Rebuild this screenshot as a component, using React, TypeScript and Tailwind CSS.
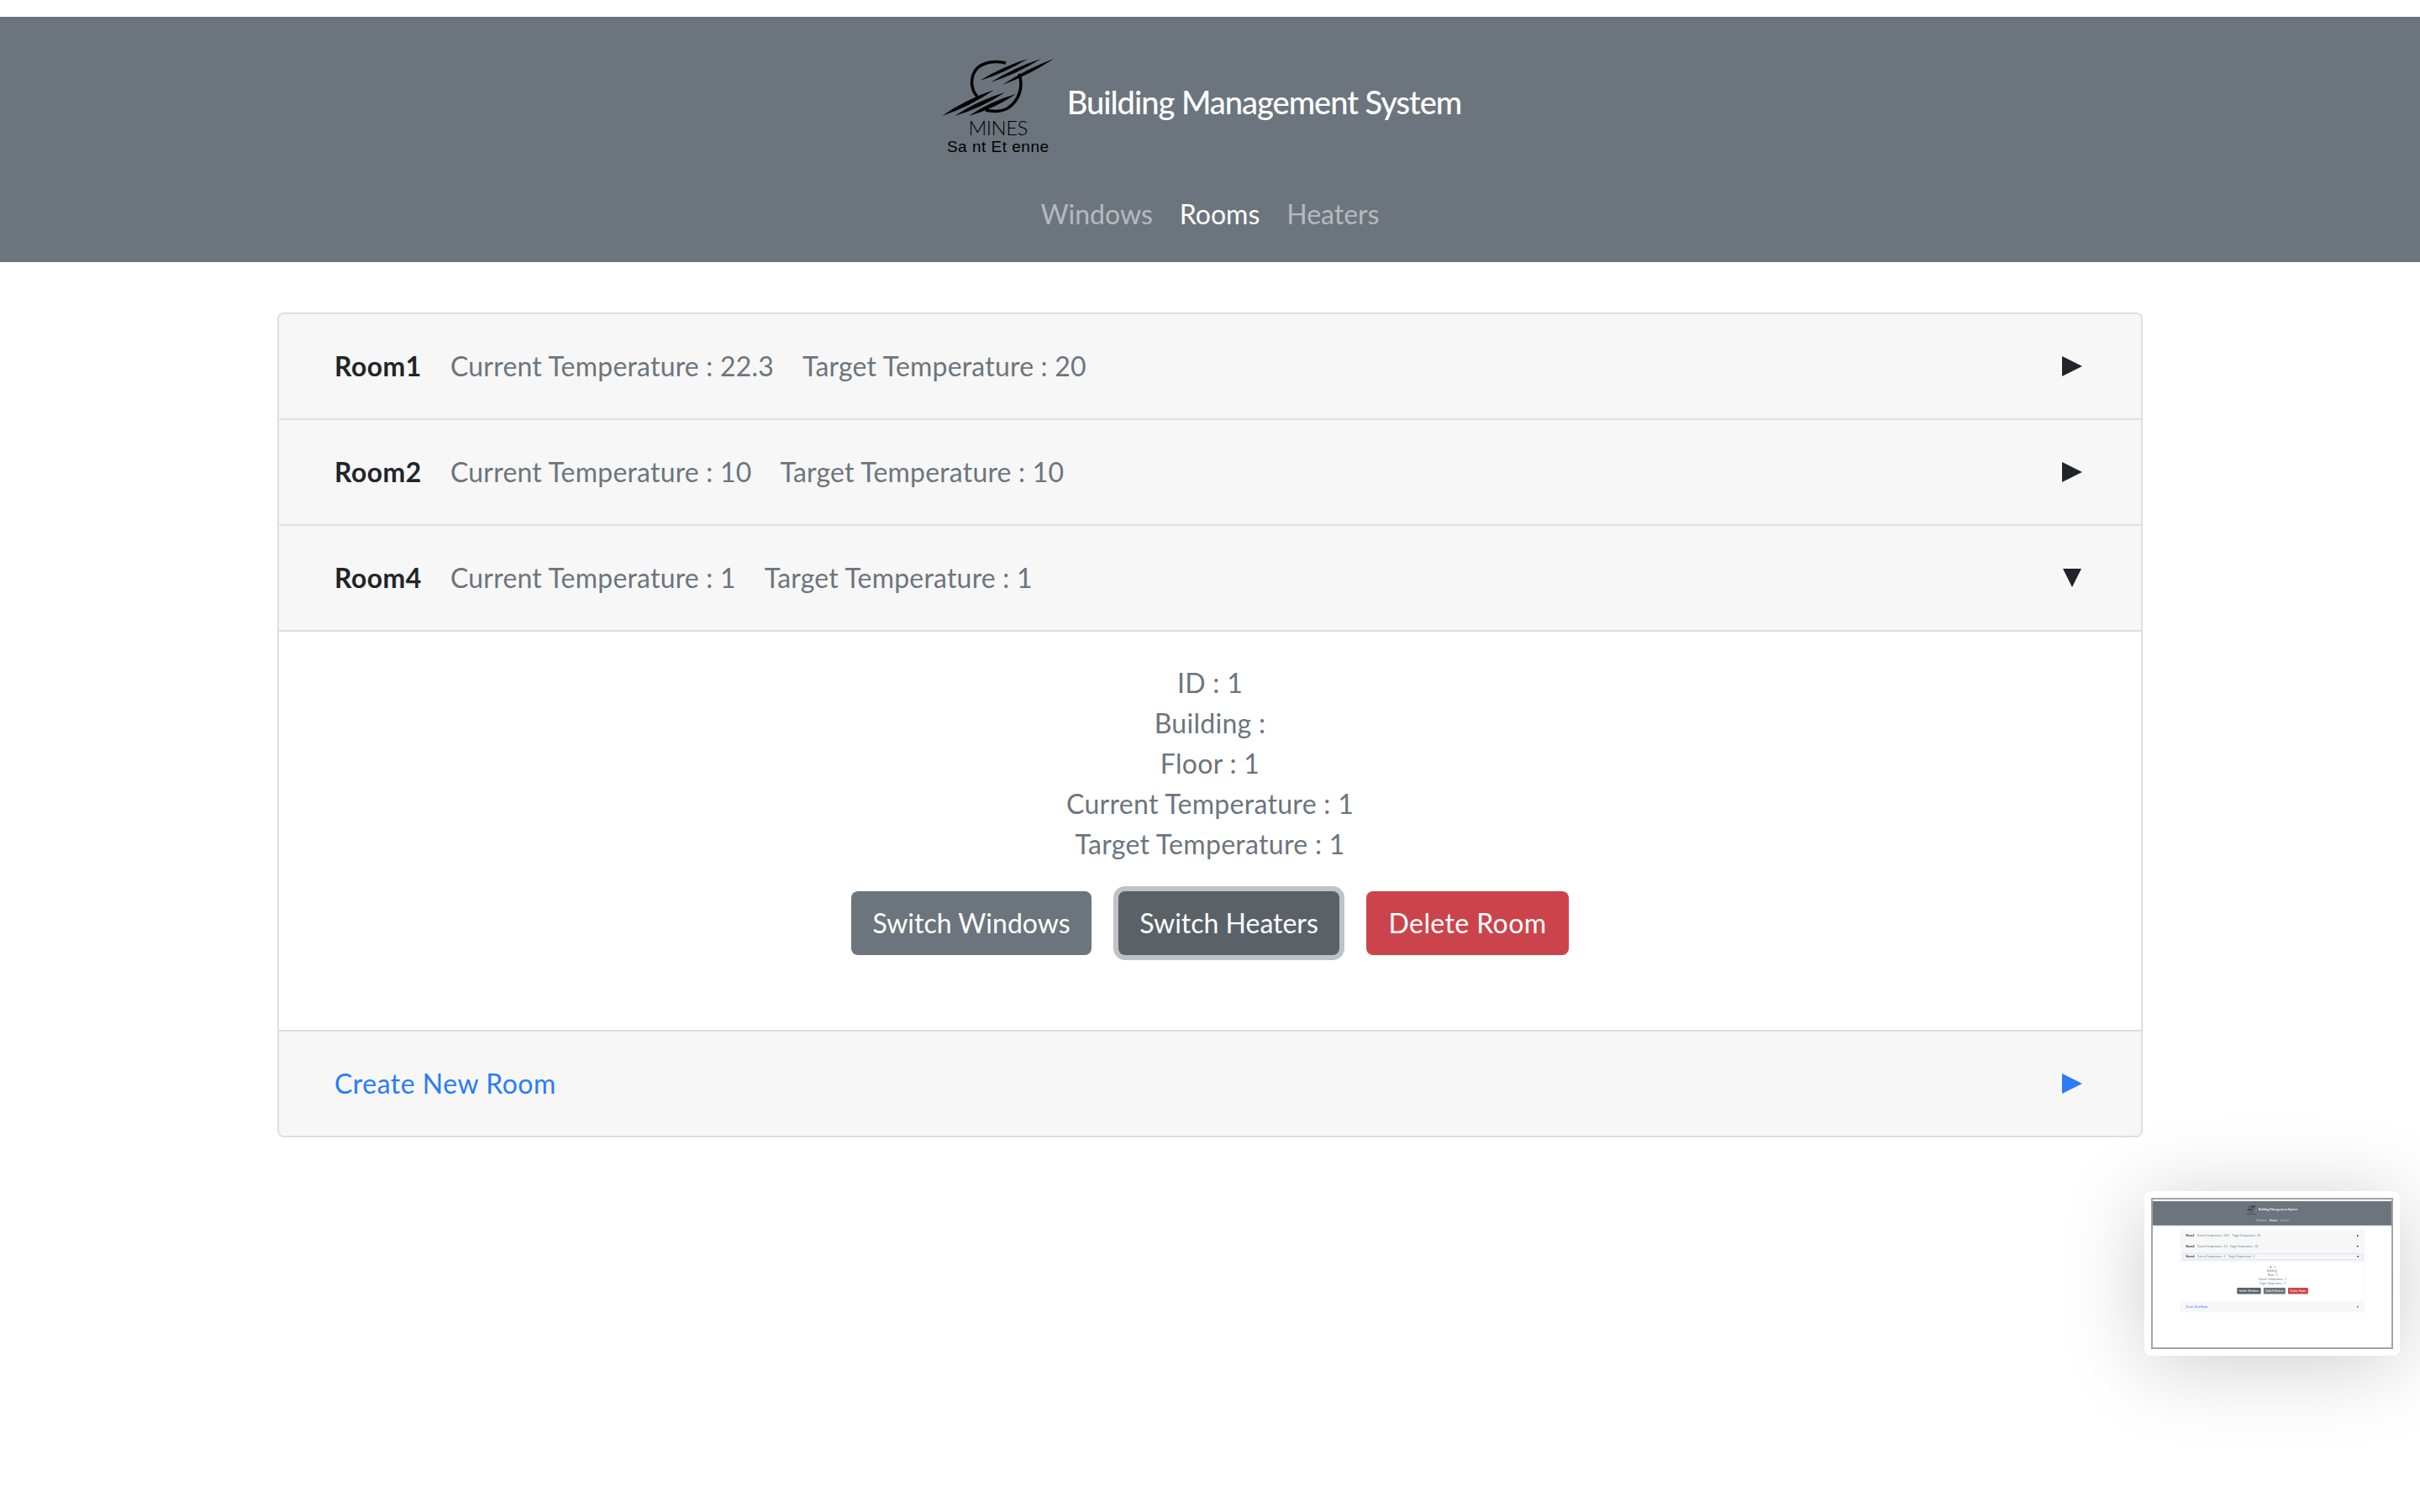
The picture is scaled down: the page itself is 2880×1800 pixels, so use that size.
const FONT = "font-['Lato','Liberation_Sans',sans-serif]";

const rooms = [
  { name: "Room1", current: "22.3", target: "20" },
  { name: "Room2", current: "10", target: "10" },
];

function spindle(x1: number, y1: number, x2: number, y2: number, w: number) {
  const mx = (x1 + x2) / 2;
  const my = (y1 + y2) / 2;
  const dx = x2 - x1;
  const dy = y2 - y1;
  const len = Math.hypot(dx, dy);
  const nx = (-dy / len) * w;
  const ny = (dx / len) * w;
  return `M${x1} ${y1}Q${mx + nx} ${my + ny} ${x2} ${y2}Q${mx - nx} ${my - ny} ${x1} ${y1}Z`;
}

function Logo() {
  return (
    <div className="flex w-[134px] flex-col items-center text-black">
      <svg width="134" height="68" viewBox="0 0 134 68" fill="none">
        <path d="M76 5C60 1 42 5 37 19C34 29 36 38 42 45" stroke="#000" strokeWidth="3.5" />
        <path d="M92 18C97 34 92 50 78 59C70 63 60 63 52 61" stroke="#000" strokeWidth="3.5" />
        <g fill="#000">
          <path d={spindle(133, 0, 72, 31, 4)} />
          <path d={spindle(118, 0, 58, 28, 4)} />
          <path d={spindle(102, 0, 45, 26, 4)} />
          <path d={spindle(62, 37, 0, 68, 5)} />
          <path d={spindle(75, 40, 15, 68, 5)} />
          <path d={spindle(88, 42, 32, 68, 5)} />
        </g>
      </svg>
      <div className="mt-[1px] text-[24px] leading-[25px] font-light tracking-[-0.5px]">MINES</div>
      <div className="text-[19px] leading-[21px] font-['Liberation_Sans',sans-serif] tracking-[0.5px] whitespace-nowrap">
        Sa nt Et enne
      </div>
    </div>
  );
}

function Arrow({ open, blue }: { open?: boolean; blue?: boolean }) {
  const color = blue ? "#2b7cf6" : "#212529";
  return (
    <svg width="24" height="24" viewBox="0 0 24 24">
      <path d={open ? "M1 1H23L12 23Z" : "M0 0L24 12L0 24Z"} fill={color} />
    </svg>
  );
}

function Row({
  children,
  open,
  blue,
  focused,
}: {
  children: React.ReactNode;
  open?: boolean;
  blue?: boolean;
  focused?: boolean;
}) {
  return (
    <div className="flex h-[124px] items-center justify-between bg-[#f7f7f7] pr-[70px] pl-[66px] tracking-[0.2px]">
      <div className="flex items-center">{children}</div>
      <Arrow open={open} blue={blue} />
      {focused && (
        <div className="absolute right-[24px] left-[24px] h-[76px] rounded-lg border-[6px] border-[#bcd6fb]" />
      )}
    </div>
  );
}

function RoomHead({ name, current, target }: { name: string; current: string; target: string }) {
  return (
    <>
      <span className="w-[138px] font-bold tracking-[0.4px] text-[#212529]">{name}</span>
      <span className="mr-[34px] text-[#6c757d]">Current Temperature : {current}</span>
      <span className="text-[#6c757d]">Target Temperature : {target}</span>
    </>
  );
}

function Page({ mini }: { mini?: boolean }) {
  return (
    <div className={`h-[1800px] w-[2880px] bg-white pt-5 text-[32px] leading-[48px] ${FONT}`}>
      <header className="flex h-[292px] flex-col items-center bg-[#6c757d]">
        <div className="mt-[50px] flex items-start gap-[15px] pr-[20px]">
          <Logo />
          <h1 className="mt-[27px] text-[38px] leading-[48px] font-medium tracking-[-1px] whitespace-nowrap text-white">
            Building Management System
          </h1>
        </div>
        <nav className="mt-[46px] flex gap-[32px]">
          <a className="text-white/50">Windows</a>
          <a className="text-white">Rooms</a>
          <a className="text-white/50">Heaters</a>
        </nav>
      </header>

      <main className="relative mx-auto mt-[60px] w-[2220px] overflow-hidden rounded-lg border-2 border-[#dfdfdf]">
        {rooms.map((room) => (
          <div key={room.name} className="border-b-2 border-[#dfdfdf]">
            <Row>
              <RoomHead {...room} />
            </Row>
          </div>
        ))}
        <div className="border-b-2 border-[#dfdfdf]">
          <Row open focused={mini}>
            <RoomHead name="Room4" current="1" target="1" />
          </Row>
        </div>
        <div className="flex h-[476px] flex-col items-center border-b-2 border-[#dfdfdf] bg-white pt-[37px] tracking-[0.3px] text-[#6c757d]">
          <p>ID : 1</p>
          <p>Building :</p>
          <p>Floor : 1</p>
          <p>Current Temperature : 1</p>
          <p>Target Temperature : 1</p>
          <div className="mt-[32px] flex gap-[32px] tracking-normal text-white">
            <button className={`h-[76px] w-[286px] rounded-lg ${mini ? "bg-[#5a6268]" : "bg-[#6c757d]"}`}>
              Switch Windows
            </button>
            <button
              className={`h-[76px] w-[263px] rounded-lg ${mini ? "bg-[#6c757d]" : "bg-[#5a6268] ring-[6px] ring-[#bfc3c6]"}`}
            >
              Switch Heaters
            </button>
            <button className="h-[76px] w-[241px] rounded-lg bg-[#cc444b] tracking-[0.4px]">Delete Room</button>
          </div>
        </div>
        <Row blue>
          <span className="text-[#2b7cf6] tracking-[0.5px]">Create New Room</span>
        </Row>
      </main>
    </div>
  );
}

export default function App() {
  return (
    <div className="relative h-[1800px] overflow-hidden bg-white">
      <Page />
      {/* screenshot preview in the corner */}
      <div className="absolute top-[1418px] left-[2552px] h-[196px] w-[304px] rounded-lg bg-white p-2 shadow-[0_10px_100px_rgba(0,0,0,0.2)]">
        <div className="h-[180px] w-[288px] overflow-hidden border-2 border-[#a3a3a3] blur-[0.6px]">
          <div className="origin-top-left scale-[0.099]">
            <Page mini />
          </div>
        </div>
      </div>
    </div>
  );
}
